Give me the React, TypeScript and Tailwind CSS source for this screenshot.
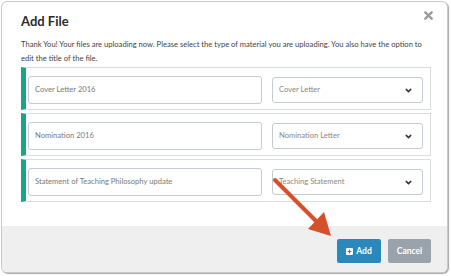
import { ChevronDown } from 'lucide-react'

const files = [
  { title: 'Cover Letter 2016', type: 'Cover Letter' },
  { title: 'Nomination 2016', type: 'Nomination Letter' },
  { title: 'Statement of Teaching Philosophy update', type: 'Teaching Statement' },
]

function FileRow({ title, type }: { title: string; type: string }) {
  return (
    <div className="h-[43px] flex items-start gap-[10px] border border-[#dcdcdc] border-l-[5px] border-l-[#16a68a] pl-[2px] pt-[8px]">
      <div className="w-[234px] h-[28px] flex items-center px-[6px] border border-[#c5cbd3] rounded-[3px] text-[7.6px] text-[#7a7a7a]">
        {title}
      </div>
      <div className="w-[151px] h-[26px] mt-[1px] flex items-center justify-between pl-[6px] pr-[9px] border border-[#c5cbd3] rounded-[3px] text-[7.6px] text-[#888]">
        <span>{type}</span>
        <ChevronDown className="w-[9px] h-[9px] text-[#333]" strokeWidth={4} />
      </div>
    </div>
  )
}

export default function App() {
  return (
    <div className="w-[451px] h-[276px] bg-white relative overflow-hidden" style={{ fontFamily: 'Lato, "Open Sans", sans-serif' }}>
      <div className="ml-[1px] mt-[1px] w-[447px] h-[272px] relative flex flex-col bg-white border border-[#c9c9c9] rounded-[6px] shadow-[1px_1px_1px_rgba(0,0,0,0.35)] overflow-hidden">
        <div className="px-[19px] pt-[11px]">
          <h1 className="text-[13px] leading-[16px] font-bold text-[#2b2b2b]">Add File</h1>
          <p className="mt-[8px] text-[7.6px] leading-[14px] text-[#444]">
            Thank You! Your files are uploading now. Please select the type of material you are uploading. You also have the option to edit the title of the file.
          </p>
        </div>
        <button className="absolute top-[9px] right-[14px] w-[9px] h-[9px]">
          <svg viewBox="0 0 10 10" className="w-[9px] h-[9px]">
            <path d="M1.5 1.5 L8.5 8.5 M8.5 1.5 L1.5 8.5" stroke="#9a9a9a" strokeWidth="2.6" strokeLinecap="round" />
          </svg>
        </button>
        <div className="ml-[19px] mr-[16px] mt-[2px] flex flex-col gap-[3px]">
          {files.map((f) => (
            <FileRow key={f.title} title={f.title} type={f.type} />
          ))}
        </div>
        <div className="flex-1" />
        <div className="h-[46px] bg-[#efefef] flex items-start justify-end gap-[7px] pr-[16px] pt-[13px]">
          <button className="w-[44px] h-[24px] bg-[#2b88bd] rounded-[2px] flex items-center justify-center gap-[3px] text-white text-[8.5px] font-bold">
            <svg viewBox="0 0 8 8" className="w-[7px] h-[7px]">
              <rect x="0" y="0" width="8" height="8" rx="1.2" fill="white" />
              <path d="M4 1.8 V6.2 M1.8 4 H6.2" stroke="#2b88bd" strokeWidth="1.4" />
            </svg>
            Add
          </button>
          <button className="w-[43px] h-[24px] bg-[#9aa2ac] rounded-[2px] flex items-center justify-center text-white text-[8.5px] font-bold">
            Cancel
          </button>
        </div>
      </div>
      <svg className="absolute left-0 top-0 pointer-events-none" width="451" height="276" viewBox="0 0 451 276">
        <line x1="275" y1="180" x2="317" y2="222" stroke="#d4512b" strokeWidth="4" strokeLinecap="round" />
        <polygon points="331,236 308,229 324,212" fill="#d4512b" />
      </svg>
    </div>
  )
}
